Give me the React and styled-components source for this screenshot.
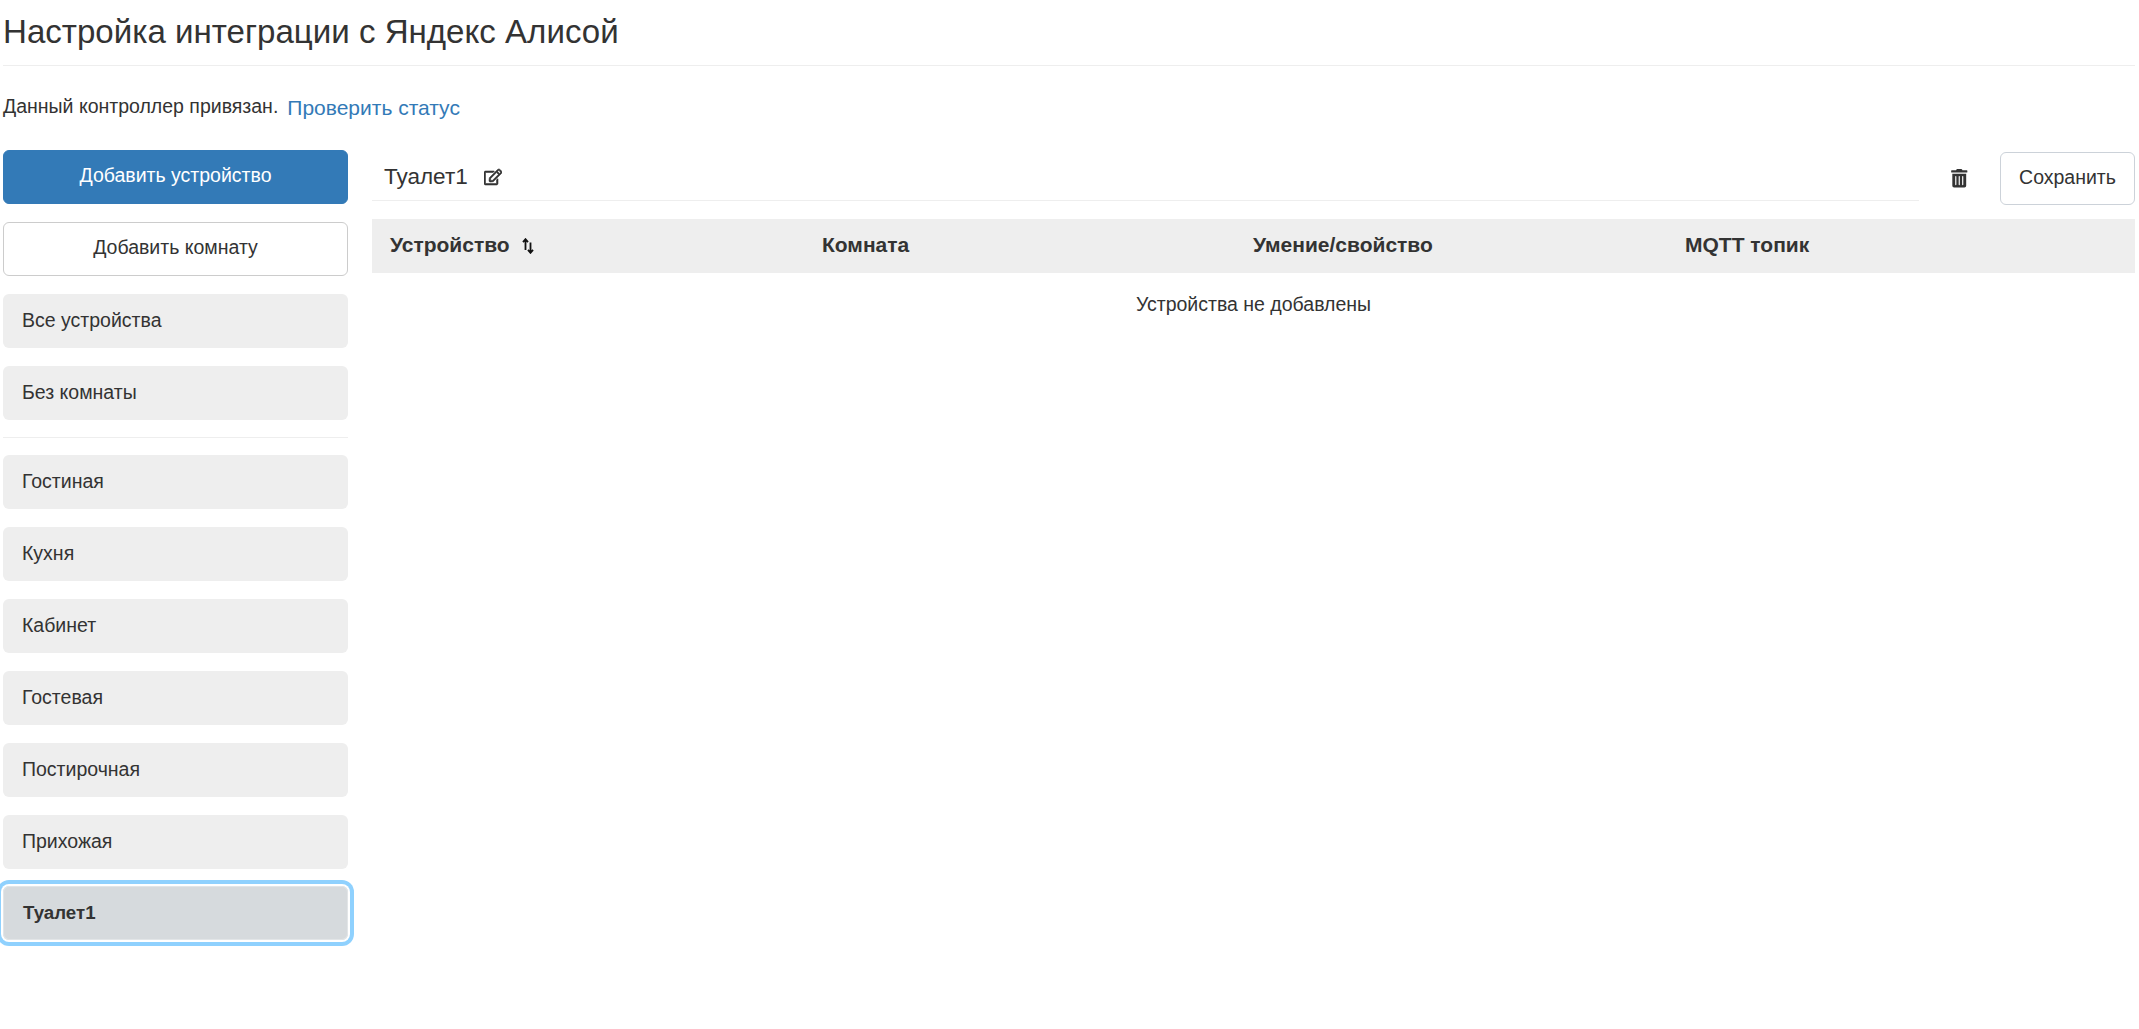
import React from 'react';
import styled, { createGlobalStyle } from 'styled-components';
import { FaRegEdit, FaTrashAlt } from 'react-icons/fa';

const GlobalStyle = createGlobalStyle`
  * {
    box-sizing: border-box;
  }

  html, body {
    margin: 0;
    padding: 0;
    background: #fff;
  }

  body {
    font-family: "Liberation Sans", Arial, sans-serif;
    font-size: 19.5px;
    line-height: 1.43;
    color: #333;
  }
`;

const Page = styled.div`
  width: 2139px;
  height: 1029px;
  padding: 0 4px 0 3px;
  overflow: hidden;
`;

const Header = styled.h1`
  margin: 0;
  height: 66px;
  padding-top: 9px;
  border-bottom: 1px solid #eee;
  font-size: 33.1px;
  font-weight: 400;
  line-height: 46px;
`;

const StatusLine = styled.div`
  display: flex;
  align-items: center;
  gap: 9px;
  height: 26px;
  margin-top: 28px;
  white-space: nowrap;
`;

const StatusLink = styled.a`
  color: #337ab7;
  font-size: 21px;
  text-decoration: none;
  position: relative;
  top: 1px;
`;

const Columns = styled.div`
  display: flex;
  gap: 24px;
  margin-top: 30px;
`;

const Sidebar = styled.aside`
  display: flex;
  flex-direction: column;
  gap: 18px;
  flex: 0 0 345px;
`;

const Button = styled.button`
  height: 54px;
  width: 100%;
  padding: 0 0 2px;
  border-radius: 6px;
  font: inherit;
  text-align: center;
  border: 1px solid ${(p) => (p.$primary ? '#337ab7' : '#ccc')};
  background: ${(p) => (p.$primary ? '#337ab7' : '#fff')};
  color: ${(p) => (p.$primary ? '#fff' : '#333')};
`;

const Room = styled.div`
  display: flex;
  align-items: center;
  height: 54px;
  padding: 0 19px;
  border-radius: 6px;
  background: #eee;
`;

const ActiveRoom = styled(Room)`
  margin: -1px 0 1px;
  padding-left: 20px;
  background: #d6dadd;
  font-size: 18.7px;
  font-weight: 700;
  box-shadow: inset 0 0 0 1px #e2e5e7, 0 0 0 2px #fff, 0 0 0 6px #8fd1fe;
`;

const Divider = styled.hr`
  width: 100%;
  margin: -1px 0;
  border: 0;
  border-top: 1px solid #eee;
`;

const Main = styled.main`
  flex: 1;
  min-width: 0;
`;

const RoomBar = styled.div`
  display: flex;
  align-items: flex-start;
  height: 53px;
  margin-top: 2px;
`;

const RoomTitle = styled.div`
  flex: 1;
  display: flex;
  align-items: center;
  gap: 16px;
  height: 51px;
  margin-top: -2px;
  padding: 4px 12px 0;
  border-bottom: 1px solid #eee;
  font-size: 22.5px;
  line-height: 30px;
`;

const EditIcon = styled(FaRegEdit)`
  font-size: 18px;
  color: #333;
  stroke: currentColor;
  stroke-width: 18px;
`;

const TrashSlot = styled.span`
  display: inline-flex;
  align-items: center;
  justify-content: center;
  width: 81px;
  height: 53px;
  color: #333;
  font-size: 18.5px;
`;

const SaveButton = styled(Button)`
  flex: 0 0 135px;
  width: 135px;
  height: 53px;
  border-color: #ccd2d9;
`;

const Table = styled.table`
  width: 100%;
  margin-top: 14px;
  border-collapse: collapse;
  table-layout: fixed;
`;

const Th = styled.th`
  height: 54px;
  padding: 0 18px 2px;
  background: #eee;
  text-align: left;
  font-size: 21px;
  font-weight: 700;
  width: ${(p) => p.$width}px;
`;

const SortIcon = styled.svg`
  width: 12px;
  height: 16px;
  margin-left: 12px;
  vertical-align: -2px;
`;

const EmptyCell = styled.td`
  height: 64px;
  padding: 0;
  text-align: center;
`;

const rooms = ['Гостиная', 'Кухня', 'Кабинет', 'Гостевая', 'Постирочная', 'Прихожая'];

export default function App() {
  return (
    <Page>
      <GlobalStyle />
      <Header>Настройка интеграции с Яндекс Алисой</Header>
      <StatusLine>
        <span>Данный контроллер привязан.</span>
        <StatusLink href="#">Проверить статус</StatusLink>
      </StatusLine>
      <Columns>
        <Sidebar>
          <Button $primary>Добавить устройство</Button>
          <Button>Добавить комнату</Button>
          <Room>Все устройства</Room>
          <Room>Без комнаты</Room>
          <Divider />
          {rooms.map((room) => (
            <Room key={room}>{room}</Room>
          ))}
          <ActiveRoom>Туалет1</ActiveRoom>
        </Sidebar>
        <Main>
          <RoomBar>
            <RoomTitle>
              Туалет1
              <EditIcon />
            </RoomTitle>
            <TrashSlot>
              <FaTrashAlt />
            </TrashSlot>
            <SaveButton>Сохранить</SaveButton>
          </RoomBar>
          <Table>
            <thead>
              <tr>
                <Th $width={432}>
                  Устройство
                  <SortIcon viewBox="0 0 12 16" fill="none" stroke="#111" strokeWidth="1.8">
                    <path d="M3.5 12V1.5M1 4.2 3.5 1.2 6 4.2M8.5 4.5V15M6 11.8l2.5 3 2.5-3" />
                  </SortIcon>
                </Th>
                <Th $width={431}>Комната</Th>
                <Th $width={432}>Умение/свойство</Th>
                <Th>MQTT топик</Th>
              </tr>
            </thead>
            <tbody>
              <tr>
                <EmptyCell colSpan={4}>Устройства не добавлены</EmptyCell>
              </tr>
            </tbody>
          </Table>
        </Main>
      </Columns>
    </Page>
  );
}
